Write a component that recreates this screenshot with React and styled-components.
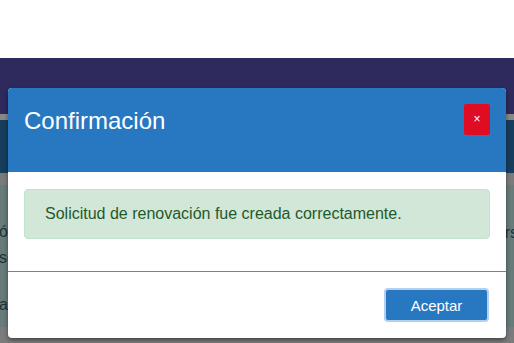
import React from 'react';
import styled, { createGlobalStyle } from 'styled-components';

const Global = createGlobalStyle`
    html, body {
        margin: 0;
        padding: 0;
        width: 514px;
        height: 343px;
        overflow: hidden;
        font-family: "Liberation Sans", Arial, sans-serif;
    }
`

const Page = styled.div`
    position: relative;
    width: 514px;
    height: 343px;
    overflow: hidden;
    display: flex;
    flex-direction: column;
`
const Band = styled.div`
    height: ${p => p.h}px;
    background: ${p => p.bg};
    flex-shrink: 0;
`
const Content = styled.div`
    height: 142px;
    background: #677b7b;
    display: flex;
    justify-content: space-between;
    color: #1d3236;
    font-size: 16px;
    flex-shrink: 0;
`
const Column = styled.div`
    display: flex;
    flex-direction: column;
    padding-top: ${p => p.top}px;
    margin-left: ${p => p.left || 0}px;
    margin-right: ${p => p.right || 0}px;
`
const Line = styled.div`
    height: ${p => p.h || 24}px;
    line-height: 24px;
`

const Modal = styled.div`
    position: absolute;
    top: 88px;
    left: 8px;
    width: 498px;
    height: 250px;
    background: #fff;
    border-radius: 4px;
    overflow: hidden;
    box-shadow: 0 2px 4px rgba(0, 0, 0, 0.45);
    display: flex;
    flex-direction: column;
`
const Header = styled.div`
    height: 84px;
    box-sizing: border-box;
    background: #2777c1;
    padding: 16px 16px 0 16px;
    display: flex;
    justify-content: space-between;
    align-items: flex-start;
`
const Title = styled.h4`
    margin: 3px 0 0 0;
    font-size: 24px;
    font-weight: 400;
    line-height: 28.8px;
    color: #fff;
`
const Close = styled.button`
    width: 26px;
    height: 31px;
    padding: 0;
    border: none;
    border-radius: 2px;
    background: #df0c24;
    color: #fff;
    font-family: "Liberation Sans", Arial, sans-serif;
    font-size: 12px;
    line-height: 31px;
    cursor: pointer;
`
const Body = styled.div`
    height: 100px;
    box-sizing: border-box;
    padding: 17px 16px 0 16px;
    border-bottom: 1px solid #4a9a89;
`
const Alert = styled.div`
    box-sizing: border-box;
    height: 50px;
    padding: 12px 20px;
    border: 1px solid #c2e3cb;
    border-radius: 4px;
    background: #d3e7d8;
    color: #1e5a2b;
    font-size: 16px;
    line-height: 24px;
`
const Footer = styled.div`
    flex: 1;
    display: flex;
    justify-content: flex-end;
    align-items: flex-start;
    padding: 16px 17px 0 0;
`
const Button = styled.button`
    width: 105px;
    height: 34px;
    box-sizing: border-box;
    border: 2px solid #b3d0ee;
    border-radius: 4px;
    background: #2777c1;
    color: #fff;
    font-family: "Liberation Sans", Arial, sans-serif;
    font-size: 15px;
    cursor: pointer;
`

const App = () => {
  return (
      <Page>
          <Global />
          <Band h={58} bg="#ffffff" />
          <Band h={56} bg="#2e2a5e" />
          <Band h={6} bg="#888888" />
          <Band h={53} bg="#173d5c" />
          <Band h={12} bg="#7b7b7b" />
          <Content>
              <Column top={35} left={-1}>
                  <Line h={26}>ón</Line>
                  <Line h={47}>so</Line>
                  <Line>a</Line>
              </Column>
              <Column top={36} right={-4}>
                  <Line>rs</Line>
              </Column>
          </Content>
          <Band h={16} bg="#7b7b7b" />

          <Modal>
              <Header>
                  <Title>Confirmación</Title>
                  <Close>×</Close>
              </Header>
              <Body>
                  <Alert>Solicitud de renovación fue creada correctamente.</Alert>
              </Body>
              <Footer>
                  <Button>Aceptar</Button>
              </Footer>
          </Modal>
      </Page>
  )
};

export default App;
